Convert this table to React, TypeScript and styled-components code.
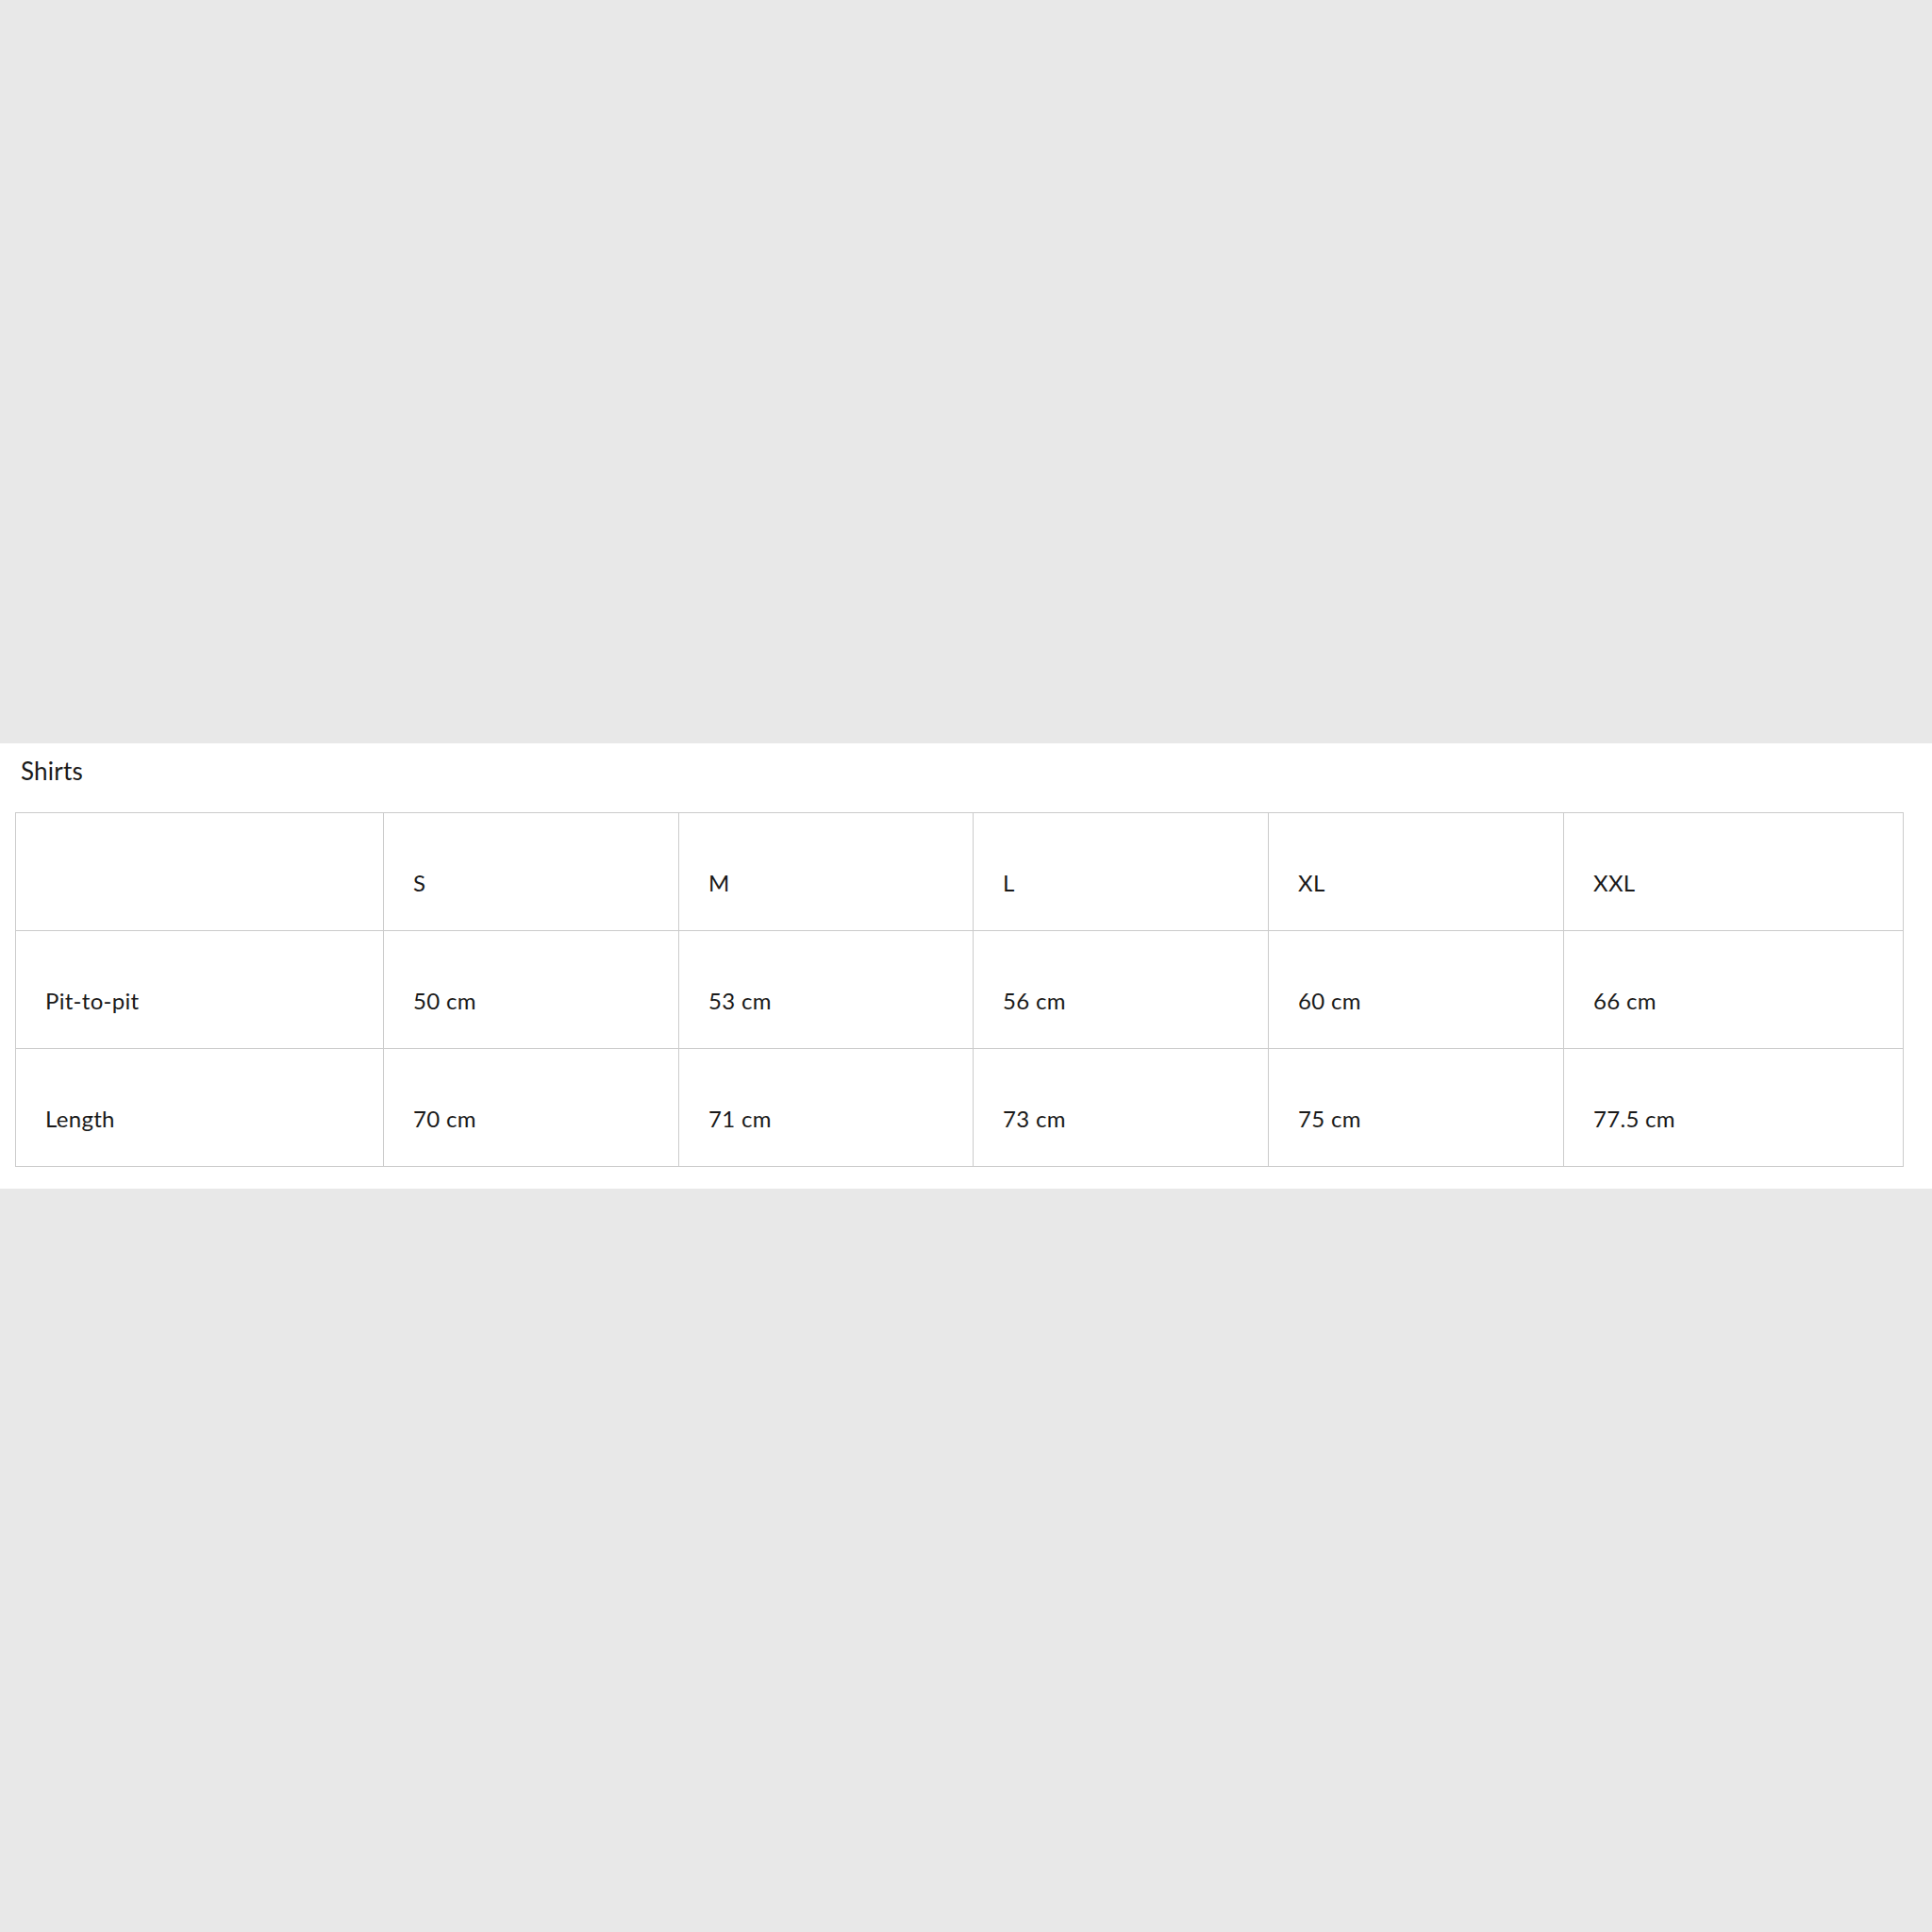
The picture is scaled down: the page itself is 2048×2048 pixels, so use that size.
import React, { FunctionComponent } from 'react';
import styled, { createGlobalStyle } from 'styled-components';

const GlobalStyle = createGlobalStyle`
  html, body {
    margin: 0;
    padding: 0;
    background-color: #e8e8e8;
  }
`;

const Page = styled.div`
  min-height: 100vh;
  display: flex;
  flex-direction: column;
  justify-content: center;
  font-family: Lato, 'Noto Sans', sans-serif;
  color: #1a1a1a;
`;

const Panel = styled.section`
  background-color: #ffffff;
  padding: 14px 30px 23px 16px;
`;

const Title = styled.h3`
  margin: 0 0 29px 6px;
  font-size: 26px;
  line-height: 30px;
  font-weight: 400;
  letter-spacing: 0.2px;
`;

const SizeTable = styled.table`
  width: 100%;
  table-layout: fixed;
  border-collapse: collapse;
  font-size: 24px;
  line-height: 29px;
  letter-spacing: 0.3px;
`;

const Col = styled.col<{ $width?: number }>`
  width: ${({ $width }) => ($width ? `${$width}px` : 'auto')};
`;

const Cell = styled.td`
  border: 1px solid #cbcbcb;
  padding: 59px 31px 36px;
  vertical-align: top;
  text-align: left;
  font-weight: 400;
`;

const columnWidths = [390, 313, 312, 313, 313, undefined];

const sizes = ['S', 'M', 'L', 'XL', 'XXL'];

const measurements = [
  { label: 'Pit-to-pit', values: ['50 cm', '53 cm', '56 cm', '60 cm', '66 cm'] },
  { label: 'Length', values: ['70 cm', '71 cm', '73 cm', '75 cm', '77.5 cm'] },
];

const App: FunctionComponent = () => {
  return <>
    <GlobalStyle />
    <Page>
      <Panel>
        <Title>Shirts</Title>
        <SizeTable>
          <colgroup>
            {columnWidths.map((width, i) => <Col key={i} $width={width} />)}
          </colgroup>
          <tbody>
            <tr>
              <Cell />
              {sizes.map(size => <Cell key={size}>{size}</Cell>)}
            </tr>
            {measurements.map(({ label, values }) => <tr key={label}>
              <Cell>{label}</Cell>
              {values.map((value, i) => <Cell key={i}>{value}</Cell>)}
            </tr>)}
          </tbody>
        </SizeTable>
      </Panel>
    </Page>
  </>
}

export default App;
